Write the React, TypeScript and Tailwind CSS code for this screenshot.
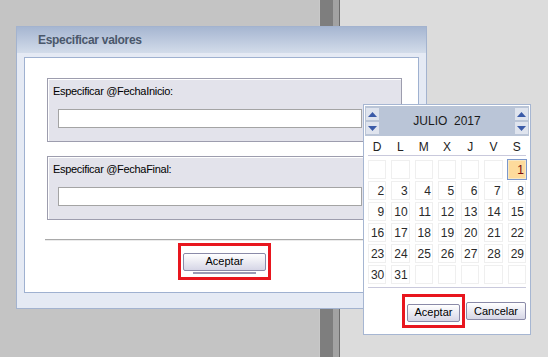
import clsx from "clsx";

const days: (number | null)[] = [
  null, null, null, null, null, null, 1,
  2, 3, 4, 5, 6, 7, 8,
  9, 10, 11, 12, 13, 14, 15,
  16, 17, 18, 19, 20, 21, 22,
  23, 24, 25, 26, 27, 28, 29,
  30, 31, null, null, null, null, null,
];

const weekDays = ["D", "L", "M", "X", "J", "V", "S"];

function WinButton({ label, className }: { label: string; className?: string }) {
  return (
    <button
      className={clsx(
        "h-[18px] rounded-[2px] border border-[#8a8aa8] bg-linear-to-b from-white to-[#d6d6e6] text-[11px] leading-none text-black",
        className,
      )}
    >
      {label}
    </button>
  );
}

function RedBox({ children }: { children: React.ReactNode }) {
  return <div className="border-[3px] border-[#e8161e] p-[2px]">{children}</div>;
}

// little spin button of the month / year pickers
function Spin({ up }: { up?: boolean }) {
  return (
    <div className="flex h-[12px] w-[13px] items-center justify-center bg-[#dfe4ee]">
      <svg width="9" height="5" viewBox="0 0 9 5">
        {up ? (
          <polygon points="0,5 9,5 4.5,0" fill="#3b5ba8" />
        ) : (
          <polygon points="0,0 9,0 4.5,5" fill="#3b5ba8" />
        )}
      </svg>
    </div>
  );
}

function FieldBox({ label }: { label: string }) {
  return (
    <div className="h-[64px] border border-[#9d9dae] bg-[#e3e3eb] pl-[5px] pt-[5px] shadow-[inset_1px_1px_0_#ffffff]">
      <div className="h-[14px] text-[11px] leading-[14px] tracking-[-0.3px] text-black">{label}</div>
      <div className="ml-[5px] mt-[11px] h-[19px] w-[304px] border border-[#a4a4a4] bg-white" />
    </div>
  );
}

function Calendar() {
  return (
    <div className="absolute left-[363px] top-[104px] w-[168px] border border-[#a6b6d2] bg-white p-[1px]">
      <div className="flex h-[30px] items-stretch justify-between bg-[#bac5d7] px-[1px] py-[2px]">
        <div className="flex flex-col gap-[2px]">
          <Spin up />
          <Spin />
        </div>
        <div className="flex items-center text-[12px] text-[#1a1a1a]">
          JULIO&nbsp;&nbsp;2017
        </div>
        <div className="flex flex-col gap-[2px]">
          <Spin up />
          <Spin />
        </div>
      </div>
      <div className="px-[3px]">
        <div className="grid h-[20px] grid-cols-7 gap-x-[5px] border-b border-[#c9c9dc] pt-[4px]">
          {weekDays.map((d) => (
            <div key={d} className="text-center text-[12px] leading-[14px] text-[#222]">
              {d}
            </div>
          ))}
        </div>
        <div className="mt-[4px] grid grid-cols-7 gap-x-[5px] gap-y-[2px]">
          {days.map((d, i) =>
            d === 1 ? (
              <div
                key={i}
                className="-mx-[1px] -my-[1px] h-[21px] border border-[#7b97cc] bg-[#fddb9c] pr-[2px] text-right text-[12px] leading-[21px] text-[#7a0c0c] shadow-[inset_0_0_0_1px_#f7e8c4]"
              >
                1
              </div>
            ) : (
              <div
                key={i}
                className="h-[19px] border border-[#efefef] pr-[1px] text-right text-[12px] leading-[18px] text-[#2a2a2a]"
              >
                {d ?? ""}
              </div>
            ),
          )}
        </div>
        <div className="mt-[3px] border-t border-[#c9c9dc]" />
        <div className="flex items-center justify-end gap-[1px] pb-[5px] pt-[6px]">
          <RedBox>
            <WinButton label="Aceptar" className="w-[53px]" />
          </RedBox>
          <WinButton label="Cancelar" className="w-[60px]" />
        </div>
      </div>
    </div>
  );
}

export default function App() {
  return (
    <div className="relative flex h-[357px] w-[548px] overflow-hidden font-['Liberation_Sans',Arial,sans-serif]">
      {/* desktop background */}
      <div className="w-[319px] bg-[#c4c4c4]" />
      <div className="flex w-[21px]">
        <div className="w-[1px] bg-[#c9c9c9]" />
        <div className="w-[13px] bg-[#7e7e7e]" />
        <div className="w-[6px] bg-[#a2a2a2]" />
        <div className="w-[1px] bg-[#6c6c6c]" />
      </div>
      <div className="flex-1 bg-[#dcdcdc]" />

      {/* dialog window */}
      <div className="absolute left-[16px] top-[26px] flex h-[283px] w-[411px] flex-col border border-[#a3b3cf] bg-[#e5eaf4]">
        <div className="flex h-[26px] items-center bg-linear-to-b from-[#a6b6d1] to-[#d3dcea] pl-[21px] text-[12px] font-bold tracking-[-0.3px] text-[#4a576b]">
          Especificar valores
        </div>
        <div className="flex flex-1 flex-col px-[7px] pb-[15px] pt-[4px]">
          <div className="flex flex-1 flex-col border border-[#9fb1d0] bg-white pl-[22px] pr-[16px] pt-[20px]">
            <FieldBox label="Especificar @FechaInicio:" />
            <div className="mt-[14px]">
              <FieldBox label="Especificar @FechaFinal:" />
            </div>
            <div className="-ml-[2px] mt-[19px] h-[2px] border-t border-[#a9a9a9] bg-[#ebebeb]" />
            <div className="mt-[2px] flex justify-center">
              <RedBox>
                <WinButton label="Aceptar" className="w-[83px]" />
                <div className="mx-auto h-[2px] w-[63px] bg-[#9a9ab4]" />
                <div className="h-[1px]" />
              </RedBox>
            </div>
          </div>
        </div>
      </div>

      <Calendar />
    </div>
  );
}
